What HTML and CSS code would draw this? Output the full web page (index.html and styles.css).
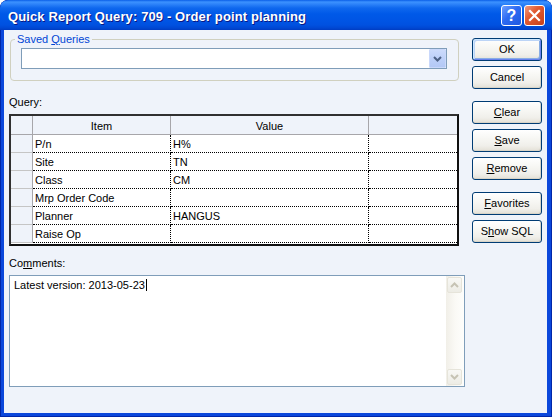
FILE: index.html
```html
<!DOCTYPE html>
<html>
<head>
<meta charset="utf-8">
<link rel="stylesheet" href="styles.css">
</head>
<body>
<div class="window">
  <div class="titlebar">
    <span class="title">Quick Report Query: 709 - Order point planning</span>
    <div class="caption-btns">
      <div class="cbtn help">?</div>
      <div class="cbtn close">
        <svg width="19" height="19" viewBox="0 0 19 19"><path d="M5 5 L14 14 M14 5 L5 14" stroke="#fff" stroke-width="2.2" stroke-linecap="square" fill="none"/></svg>
      </div>
    </div>
  </div>
  <div class="client">
    <div class="left">
      <fieldset class="group">
        <legend>Saved <u>Q</u>ueries</legend>
        <div class="combo">
          <div class="combo-text"></div>
          <div class="combo-btn">
            <svg width="9" height="6" viewBox="0 0 9 6"><path d="M1 1 L4.5 4.5 L8 1" stroke="#4D6185" stroke-width="2" fill="none"/></svg>
          </div>
        </div>
      </fieldset>
      <div class="label query-label">Query:</div>
      <div class="grid">
        <table>
          <thead>
            <tr class="head">
              <th class="ind c-ind"></th>
              <th class="c-item">Item</th>
              <th class="c-value">Value</th>
              <th class="c-last"></th>
            </tr>
          </thead>
          <tbody>
            <tr><td class="ind"></td><td>P/n</td><td>H%</td><td class="last"></td></tr>
            <tr><td class="ind"></td><td>Site</td><td>TN</td><td class="last"></td></tr>
            <tr><td class="ind"></td><td>Class</td><td>CM</td><td class="last"></td></tr>
            <tr><td class="ind"></td><td>Mrp Order Code</td><td></td><td class="last"></td></tr>
            <tr><td class="ind"></td><td>Planner</td><td>HANGUS</td><td class="last"></td></tr>
            <tr><td class="ind"></td><td>Raise Op</td><td></td><td class="last"></td></tr>
          </tbody>
        </table>
      </div>
      <div class="label comments-label">Co<u>m</u>ments:</div>
      <div class="memo">
        <div class="memo-text">Latest version: 2013-05-23<span class="caret"></span></div>
        <div class="vscroll">
          <div class="sbtn">
            <svg width="9" height="6" viewBox="0 0 9 6"><path d="M1 5 L4.5 1.5 L8 5" stroke="#C6C3B4" stroke-width="2" fill="none"/></svg>
          </div>
          <div class="sbtn">
            <svg width="9" height="6" viewBox="0 0 9 6"><path d="M1 1 L4.5 4.5 L8 1" stroke="#C6C3B4" stroke-width="2" fill="none"/></svg>
          </div>
        </div>
      </div>
    </div>
    <div class="right">
      <div class="btn default">OK</div>
      <div class="btn">Cancel</div>
      <div class="btn spaced"><u>C</u>lear</div>
      <div class="btn"><u>S</u>ave</div>
      <div class="btn"><u>R</u>emove</div>
      <div class="btn spaced"><u>F</u>avorites</div>
      <div class="btn">S<u>h</u>ow SQL</div>
    </div>
  </div>
</div>
</body>
</html>
```

FILE: styles.css
```css
* { box-sizing: border-box; }

body {
  margin: 0;
  background: #ffffff;
  font-family: "Liberation Sans", Arial, sans-serif;
  font-size: 11px;
  color: #000;
}

.window {
  width: 552px;
  height: 417px;
  display: flex;
  flex-direction: column;
  background: #0B47DB;
  border-radius: 8px 8px 0 0;
  overflow: hidden;
  box-shadow: inset 0 0 0 1px #0026A8;
}

.titlebar {
  height: 30px;
  flex: none;
  display: flex;
  align-items: flex-start;
  padding: 0 7px 0 7px;
  border-radius: 8px 8px 0 0;
  background: linear-gradient(to bottom,
    #0A5FE8 0px, #3C92FF 2px, #2E84FA 4px, #0F68EE 8px,
    #0059E8 14px, #0055E5 20px, #0051E0 25px, #0047D3 28px, #003CC2 30px);
}

.title {
  margin-top: 9px;
  margin-left: 1px;
  line-height: 16px;
  font-size: 13px;
  font-weight: bold;
  letter-spacing: 0.12px;
  color: #ffffff;
  text-shadow: 1px 1px 0 #0A1883;
  white-space: nowrap;
}

.caption-btns {
  margin-left: auto;
  margin-top: 5px;
  display: flex;
  gap: 2px;
}

.cbtn {
  width: 21px;
  height: 21px;
  border: 1px solid #ffffff;
  border-radius: 3px;
  display: flex;
  align-items: center;
  justify-content: center;
}

.help {
  background: linear-gradient(135deg, #6FA0FF 0%, #2D6BF2 45%, #1F58E0 100%);
  color: #fff;
  font-weight: bold;
  font-size: 16px;
  line-height: 19px;
}

.close {
  background: linear-gradient(135deg, #F09A80 0%, #E15A32 40%, #C6401A 100%);
}

.client {
  flex: 1;
  margin: 0 5px 4px 4px;
  background: #EFF3FA;
  display: flex;
  gap: 7px;
  padding: 0 5px;
}

.left {
  width: 456px;
  padding-top: 3px;
  display: flex;
  flex-direction: column;
}

.group {
  margin: 0 0 0 1px;
  width: 449px;
  padding: 0 0 11px 0;
  border: 1px solid #D0D0BF;
  border-radius: 4px;
  min-inline-size: 0;
}

.group legend {
  margin-left: 4px;
  padding: 0 2px;
  line-height: 13px;
  color: #0046D5;
}

.combo {
  margin: 2px 11px 0 10px;
  height: 21px;
  border: 1px solid #7F9DB9;
  background: #ffffff;
  display: flex;
}

.combo-text { flex: 1; }

.combo-btn {
  width: 17px;
  height: 19px;
  background: linear-gradient(to bottom, #CCDBFC 0%, #BDD0F9 50%, #B3C8F5 100%);
  border: 1px solid #C9D8FB;
  border-radius: 1px;
  display: flex;
  align-items: center;
  justify-content: center;
}

.label {
  line-height: 13px;
}

.query-label { margin-top: 15px; }

.grid {
  margin-top: 5px;
  width: 450px;
  height: 132px;
  border: 2px solid;
  border-color: #303030 #101010 #101010 #303030;
  background: #ffffff;
}

.grid table {
  width: 446px;
  border-collapse: separate;
  border-spacing: 0;
  table-layout: fixed;
}

.grid th, .grid td {
  padding: 0 0 0 2px;
  font-weight: normal;
  text-align: left;
  white-space: nowrap;
  overflow: hidden;
  line-height: 13px;
}

.grid tr.head { height: 19px; }
.grid tbody tr { height: 18px; }

.grid th {
  background: #EFF3FA;
  border-right: 1px solid #A7A6AA;
  border-bottom: 1px solid #A7A6AA;
  text-align: center;
  padding: 2px 0 0 0;
}

.c-ind { width: 22px; }
.c-item { width: 138px; }
.c-value { width: 198px; }
.c-last { width: 88px; }
.grid th.c-last { border-right: none; }

.grid td {
  border-right: 1px dotted #000;
  border-bottom: 1px dotted #000;
  padding-top: 1px;
}

.grid td.ind {
  background: #EFF3FA;
  border-right: 1px solid #A7A6AA;
  border-bottom: 1px solid #C5C5C5;
}

.grid td.last { border-right: none; }

.comments-label { margin-top: 11px; }

.memo {
  margin-top: 5px;
  width: 456px;
  height: 112px;
  border: 1px solid #7F9DB9;
  background: #ffffff;
  display: flex;
}

.memo-text {
  flex: 1;
  padding: 3px 4px;
  line-height: 13px;
}

.caret {
  display: inline-block;
  width: 1px;
  height: 12px;
  background: #000;
  margin-left: 1px;
  vertical-align: -2px;
}

.vscroll {
  width: 18px;
  padding: 1px 2px 1px 1px;
  display: flex;
  flex-direction: column;
  justify-content: space-between;
  background: linear-gradient(to right, #F1EFE8 0%, #FAF9F5 50%, #FEFEFC 100%);
}

.sbtn {
  width: 15px;
  height: 16px;
  border: 1px solid #E6E4DA;
  border-radius: 2px;
  background: linear-gradient(to bottom, #F8F8F5, #EDECE5);
  display: flex;
  align-items: center;
  justify-content: center;
}

.right {
  width: 70px;
  padding-top: 8px;
  display: flex;
  flex-direction: column;
  gap: 5px;
}

.btn {
  height: 23px;
  border: 1px solid #003C74;
  border-radius: 3px;
  background: linear-gradient(to bottom, #FFFFFF 0%, #F8F8F5 35%, #F0EFEA 75%, #E3E0D6 100%);
  box-shadow: inset -1px -1px 0 #D8D4C8;
  display: flex;
  align-items: center;
  justify-content: center;
  line-height: 13px;
}

.btn.default {
  box-shadow: inset 1px 1px 0 #CEE7FF, inset -1px -1px 0 #6982EE, inset 2px 2px 0 #BCD4F6, inset -2px -2px 0 #89ADE4;
}

.btn.spaced { margin-top: 7px; }
```
